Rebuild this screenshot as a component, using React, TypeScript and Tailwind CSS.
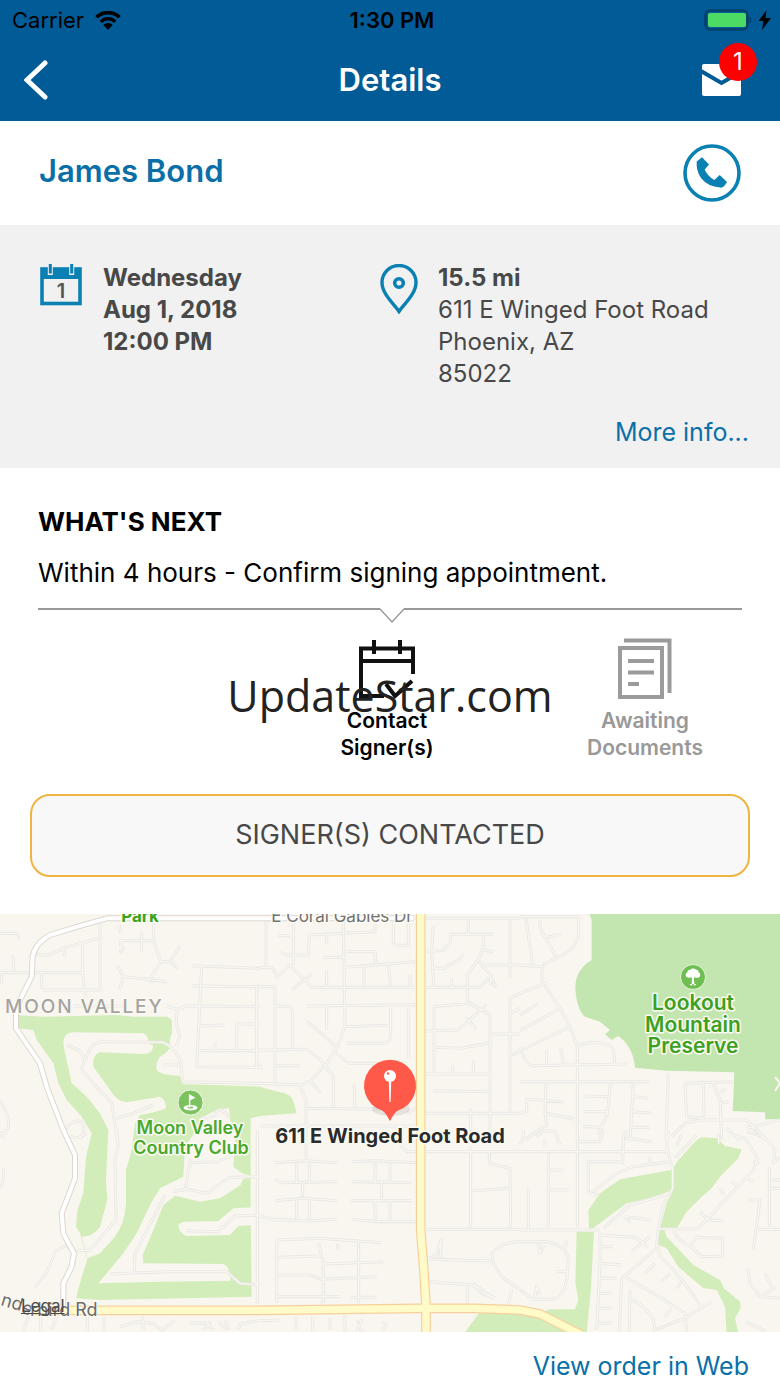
import React from "react";

type Tile = { x: number; y: number; roads: string };

const TILE_SCALE = 1 / 3;

const tiles: Tile[] = [
  {
    x: 0,
    y: -14,
    roads:
      "M0,100 H45 Q58,102 55,118 M38,165 L42,215 M0,218 H255 M5,218 V250 M90,163 L145,165 L190,145 L240,130 L295,115 M190,145 L195,172 M300,65 V270 H130 M125,218 V268 M247,130 V215 L257,290 M358,75 L362,102 M358,122 H455 M362,122 V140 M375,140 L358,160 M425,95 V155 M460,70 L462,125 L482,185 L445,245 M482,185 H510 L535,205 M510,185 L540,138 M350,195 L370,230 L358,270 M370,230 L440,238 L500,245 M575,197 L780,205 M605,200 L590,500 L780,502 M575,258 L780,260 M220,318 H380 M500,318 L532,328 L560,318 L780,320 M532,328 L528,370 L540,410 L528,440 M595,378 L675,375 M710,450 V372 H780 M600,452 H780 M645,452 V425 M770,260 V500 M200,435 L235,450 L255,475 M490,495 H540 M0,600 Q30,650 25,680 L5,715 M195,690 Q215,655 245,665 Q260,690 240,715 M245,510 Q255,465 280,435 Q290,425 310,425 L490,427 Q535,450 542,490 L548,545 L780,550 M245,510 L290,560 L335,610 L352,720 M350,655 L400,640 L460,615 M658,628 L680,640 L685,655 M600,660 L640,650 L655,628",
  },
  {
    x: 260,
    y: -14,
    roads:
      "M0,55 H780 M18,60 V205 M100,60 V195 M0,203 H35 L50,225 M55,107 H90 M60,158 L85,165 H145 L148,105 L250,100 L345,95 V65 M200,100 V130 M250,60 L255,375 M45,235 L90,195 L155,262 L465,262 M0,260 H45 V545 M95,270 L155,222 M200,210 V262 M190,172 H250 M260,155 H345 L348,200 M255,202 L465,185 M312,202 V255 M385,192 L392,258 M450,225 V262 M400,65 V130 Q402,136 415,136 H445 V65 M45,318 L90,320 Q98,325 98,345 V445 M140,318 L465,314 M200,318 V390 M140,365 L190,405 L228,440 M250,380 L385,376 M392,325 V410 Q385,430 370,430 H262 M445,325 V475 M255,375 L235,435 L200,490 L150,545 L118,555 L0,550 M0,450 L140,448 L182,480 L220,530 V620 M50,497 H120 M0,490 V510 M222,455 L268,490 L350,490 M150,545 L182,578 M118,555 L138,600 V720 M138,625 L360,628 M282,550 L285,625 M440,640 L470,625 M0,678 H465 M520,75 L515,145 M515,155 L522,262 M498,153 L548,152 L570,130 L572,103 L700,103 M625,60 V103 M525,205 H550 L595,180 L610,165 M670,105 V140 Q660,175 640,200 L622,225 V310 M670,150 L700,155 M655,182 L692,225 V258 M670,195 H780 M750,55 V235 M498,262 L660,262 L690,230 L710,262 M575,235 V262 M522,320 L630,310 L690,345 V715 M522,320 V520 M498,393 L595,390 L640,350 L680,312 M620,355 L650,388 M525,442 L600,445 L685,430 M695,402 H780 M780,280 L750,295 V640 M750,340 L780,325 M755,465 L780,455 M498,522 H690 M578,495 V515 M640,480 V515 M520,572 L690,575 M498,640 H780 M632,625 V720",
  },
  {
    x: 520,
    y: -14,
    roads:
      "M0,50 H175 V110 Q165,150 108,175 L68,195 M18,55 L38,195 M0,195 L68,200 Q62,230 70,250 L120,325 L148,375 L172,440 V720 M60,60 V85 L108,170 M82,112 L125,102 M0,280 L82,248 M0,345 L52,312 M0,392 L120,325 M5,450 L150,380 M0,440 Q15,490 35,497 L320,492 M172,440 Q210,418 270,435 Q285,450 283,490 M80,450 V490 M122,445 L130,490 M0,545 H390 M78,548 L75,640 L165,658 M0,640 L20,635 V598 L130,605 M75,640 L80,675 L15,720 M272,548 L262,640 L235,705 M190,588 L265,590 M190,635 H262 M190,680 L250,682 M340,550 L330,720 M340,590 L385,595 M338,635 L395,640 M332,682 H390 M445,520 L438,720 M495,550 L500,650 L550,655 M495,550 L640,545 M550,550 L552,655 M580,550 L600,600 L605,720 M600,575 L620,570 M455,710 L495,670 L540,660 L680,660 L740,720 M600,610 L625,605 M620,685 L660,720 M680,685 L780,660 M700,670 V695",
  },
  {
    x: 0,
    y: 216,
    roads:
      "M0,10 H20 M210,18 Q235,30 258,10 M350,0 L355,50 L345,85 L348,270 L270,360 L228,363 M0,175 Q15,150 10,115 M200,345 L165,365 L140,430 L105,470 M572,85 L555,180 M575,98 L655,95 L700,75 M520,185 L560,178 L620,190 L690,142 L780,140 M495,195 L405,370 L403,425 M332,432 L500,425 L680,425 L720,460 L780,465 M555,302 L655,305 L705,258 L780,255 M772,0 V520 M85,560 L70,605 M122,560 V605 M170,560 L155,600 M262,560 V605 M312,560 V605 M360,590 L410,575 L460,580 L485,600 L525,572 M428,560 L430,600 M570,578 L620,580 L640,600 M610,600 L632,575 M655,575 L680,600 M675,570 L688,600 M715,600 L720,582 L775,572",
  },
  {
    x: 260,
    y: 216,
    roads:
      "M138,40 V95 M42,98 L140,92 L232,98 M45,145 L60,158 L230,155 M110,100 V155 M148,100 V155 M128,160 V200 M45,212 L130,205 L232,212 M110,210 V268 M148,210 V268 M45,268 L140,273 L230,268 M275,95 L345,92 L470,98 M275,155 L455,158 M345,98 V155 M390,98 V155 M365,160 V205 M272,212 L455,212 M345,210 V270 M390,210 V275 M275,268 L350,275 L470,275 M0,258 L55,272 M50,330 L180,325 L365,338 M50,330 V520 M175,338 L190,400 V520 M55,382 L180,378 M190,402 L370,395 M55,435 L150,435 L185,448 L350,440 M50,500 L240,500 M272,502 H350 M296,335 V520 M232,340 L235,360 M420,45 L440,65 L780,65 M632,50 V295 M688,60 V100 L750,115 L752,295 M635,182 L745,175 M498,298 H780 M545,325 L540,385 M505,385 L530,375 L545,325 M505,388 L695,393 M780,335 Q725,335 695,370 L700,400 L725,440 L780,480 M510,455 L645,465 L680,490 L705,505 M640,465 L665,490 L705,505 M622,470 V520 M745,525 L755,480 M0,572 L60,570 M108,560 V600 M158,560 V605 M210,565 V600 M255,555 V605 M290,575 L305,572 L290,605 L310,600 M365,575 L380,585 L368,600",
  },
  {
    x: 520,
    y: 216,
    roads:
      "M172,0 V300 M172,35 H240 L250,0 M0,65 H445 M10,0 V20 L0,45 M50,20 Q65,-5 105,5 L120,45 M75,30 V50 M320,0 L310,20 L308,105 M315,25 L395,35 M445,0 L440,50 L455,110 M465,85 L530,15 M470,45 L485,15 M85,70 V295 M25,175 V300 M90,120 H130 M90,180 H145 M205,190 V95 H300 M210,190 L290,130 L340,110 L445,95 M220,180 L235,200 M390,80 V100 M0,300 H240 M458,115 V175 L430,225 L415,300 L410,345 L420,375 M250,295 L330,225 L435,195 M315,260 L395,270 M315,260 L330,278 M420,297 H530 L560,270 L700,120 L712,85 L675,25 L640,15 M700,95 L720,100 M540,245 L565,270 L610,272 M600,175 L612,195 M635,155 L650,165 M675,140 L700,155 M595,10 L597,40 M680,5 Q740,15 765,60 L760,100 L780,80 M748,110 V290 M755,150 H780 M748,175 H780 M715,298 H780 M682,210 H720 L700,360 M0,335 L80,335 Q140,345 145,390 L140,450 Q130,500 100,508 L40,508 L0,480 M55,335 L60,370 L72,345 M45,500 L50,470 L60,495 M110,425 H140 M138,330 V350 M240,308 V400 L230,600 M240,315 L345,322 L385,350 M240,350 L278,350 M240,400 L305,405 M235,445 H290 M235,490 H275 M235,535 H275 M230,580 H275 M460,300 Q470,330 520,355 L545,380 L608,378 V325 L530,322 L512,345 M335,365 L390,320 M410,355 L305,445 L298,605 M315,440 L400,490 L495,550 L500,605 M330,480 L328,605 M335,510 Q370,520 400,570 L405,605 M415,375 L460,420 L510,480 L540,525 M375,430 L405,400 M425,455 L450,430 M470,475 L485,455 M485,570 L575,515 M435,560 L455,535 M405,600 L480,570 M683,415 L690,460 L720,500 L770,470 M735,430 L755,470 M720,500 L780,505 M675,575 L740,605",
  },
];

const park = "#d3edba";
const land = "#f9f6ef";

function tileTransform(x: number, y: number) {
  return `translate(${x} ${y}) scale(${TILE_SCALE})`;
}

function MinorRoads({ stroke, width }: { stroke: string; width: number }) {
  return (
    <g fill="none" stroke={stroke} strokeWidth={width} strokeLinejoin="round">
      {tiles.map((t) => (
        <path key={`${t.x}-${t.y}`} d={t.roads} transform={tileTransform(t.x, t.y)} />
      ))}
    </g>
  );
}

const whiteRoad =
  "M1240,55 H320 Q230,80 150,105 Q105,130 98,170 L95,230 L60,300 L48,340 V385 L120,490 L140,560 L190,690 L225,765 V835 L185,940 L190,1000 L222,1060 L215,1100 L190,1150 V1230";
const yellowRoads =
  "M1262,20 V990 L1270,1090 L1278,1215 V1320 M100,1231 H780 L1260,1225 H1420 L1560,1230 L1620,1242 L1745,1305";

function Label({
  x,
  y,
  className,
  children,
}: {
  x: number;
  y: number;
  className: string;
  children: React.ReactNode;
}) {
  return (
    <text
      x={x}
      y={y}
      textAnchor="middle"
      stroke="#fbfaf4"
      strokeWidth="3"
      strokeLinejoin="round"
      paintOrder="stroke"
      className={className}
    >
      {children}
    </text>
  );
}

function MapView() {
  return (
    <section aria-label="Map" className="relative h-[418px] overflow-hidden bg-[#f9f6ef]">
      <svg
        viewBox="0 0 780 418"
        preserveAspectRatio="xMidYMid slice"
        className="block h-full w-full"
      >
        <rect width="780" height="418" fill={land} />
        <g transform={tileTransform(0, -14)}>
          <path
            fill={park}
            d="M50,345 L130,350 L350,345 L400,350 H500 Q518,355 516,370 V400 Q505,420 512,440 Q505,455 480,470 Q465,490 470,510 Q485,527 540,527 L548,552 L780,560 L840,577 Q875,580 882,610 L890,640 L780,648 L752,655 V925 H752 L755,1190 L300,1200 L228,1195 L245,1130 L262,1080 L240,1000 L228,980 L232,930 L250,880 L258,770 L275,700 L245,650 L200,600 L175,550 L160,490 L110,420 L100,390 L50,385Z"
          />
          <path
            fill={land}
            d="M190,430 Q190,398 220,397 L430,400 Q445,405 445,430 L458,435 Q462,460 430,462 L300,457 Q275,465 280,500 L330,570 Q350,605 380,607 L480,590 Q500,600 497,625 Q480,635 420,645 L405,670 L395,750 L378,810 V910 Q375,970 345,1010 L300,1060 L262,1075 L245,1010 Q280,1010 300,980 L322,900 L318,840 L325,690 L300,640 L260,590 L215,550 Q205,500 195,460Z"
          />
          <path
            fill={land}
            d="M590,690 L600,655 L655,628 L688,625 L690,660 L708,690 L700,800 L725,820 L750,826 Q725,835 722,855 L660,895 L600,905 L525,887 L490,915 L460,990 L428,1065 L430,1090 L670,1092 Q690,1100 692,1142 L480,1145 L295,1150 L370,1060 L410,1000 L455,905 L480,865 L550,830 L555,740Z"
          />
          <path
            fill={land}
            d="M535,980 Q535,965 560,965 L655,963 L700,925 L770,922 V975 L715,978 L690,1005 L560,1008 Q540,1000 535,980Z"
          />
        </g>
        <g transform={tileTransform(520, -14)}>
          <path
            fill="#c3e6b1"
            d="M205,35 L215,60 V180 Q165,210 166,265 Q170,330 195,350 L240,365 L270,390 L255,403 L275,420 L295,408 Q340,440 345,503 L440,512 L643,517 L638,633 L735,637 L736,658 H790 V35Z"
          />
          <path
            fill={park}
            d="M530,720 L545,712 L590,715 L615,738 L665,748 L655,775 L600,830 L575,865 L545,890 L500,935 L470,985 H420 L440,910 L460,870 L385,895 L320,910 L265,950 L220,985 H207 L205,930 L240,880 L300,838 L370,825 L455,810 L475,780Z"
          />
          <path
            fill={park}
            d="M170,995 H222 L212,1180 L200,1300 L-165,1300 L-160,1290 L-120,1235 L60,1240 L90,1228 L165,1228 L175,1200 L166,1150 Z"
          />
          <path
            fill={park}
            d="M418,990 H433 L440,1010 L520,1095 L600,1140 L612,1165 L660,1205 L662,1225 L645,1255 L655,1300 H620 L615,1220 L590,1170 L550,1165 L475,1100 L440,1045 L415,1035Z"
          />
        </g>
        <MinorRoads stroke="#e9e7e2" width={9} />
        <MinorRoads stroke="#f8f6f2" width={4} />
        <g transform={tileTransform(0, -14)} fill="none" strokeLinejoin="round">
          <path d={whiteRoad} stroke="#dcd8d1" strokeWidth="18" />
          <path d={whiteRoad} stroke="#ffffff" strokeWidth="12" />
          <path d={yellowRoads} stroke="#f8cf9c" strokeWidth="29" />
          <path d={yellowRoads} stroke="#fffbc8" strokeWidth="22" />
        </g>
        <path d="M775 163l5 6-5 8" fill="none" stroke="#f9f6ef" strokeWidth="2" />

        <g transform="translate(190.5 188.5)">
          <circle r="12.5" fill="#7cc25e" stroke="#ecf6e2" />
          <ellipse cx="0" cy="5.2" rx="7" ry="2.8" fill="#fff" />
          <ellipse cx="0" cy="5" rx="3" ry="1" fill="#7cc25e" />
          <path d="M-1.6-8.5V5h1.4v-7.2L5-4.7z" fill="#fff" />
        </g>
        <g transform="translate(693 63)">
          <circle r="12.5" fill="#6fbe52" stroke="#e6f5dc" />
          <path
            d="M-1.2 7.8h2.6l-.5-7 .4-.5c4 1.4 6-.4 6-2.4 0-1.4-.6-2.4-1.8-2.7.2-1.7-1-2.7-2.5-2.4C2-8.8-1.9-8.8-2.8-7.100c-1.600-.3-2.900.9-2.700 2.400-1.200.400-1.900 1.500-1.800 2.800.1 2 2.100 3.500 5.700 2.200l.5.6zM-3 7h6v1.200h-6z"
            fill="#fff"
          />
        </g>

        <text
          x="5"
          y="99"
          className="fill-[#a5a39f] text-[19px] font-medium tracking-widest"
          stroke="#fbfaf4"
          strokeWidth="2"
          paintOrder="stroke"
        >
          MOON VALLEY
        </text>
        <Label x={140} y={8} className="fill-[#3da419] text-[17px] font-bold">
          Park
        </Label>
        <Label x={342} y={8} className="fill-[#737373] text-[17px]">
          E Coral Gables Dr
        </Label>
        <Label x={190} y={220} className="fill-[#4aa82b] text-[18px] font-semibold">
          Moon Valley
        </Label>
        <Label x={191} y={240} className="fill-[#4aa82b] text-[18px] font-semibold">
          Country Club
        </Label>
        <Label x={693} y={96} className="fill-[#3da11f] text-[21px] font-semibold">
          Lookout
        </Label>
        <Label x={693} y={118} className="fill-[#3da11f] text-[21px] font-semibold">
          Mountain
        </Label>
        <Label x={693} y={139} className="fill-[#3da11f] text-[21px] font-semibold">
          Preserve
        </Label>
        <path id="rd" d="M0,391 L20,397 Q26,402 36,402 H140" fill="none" />
        <text
          className="fill-[#6b6b6b] text-[18px]"
          stroke="#fbfaf4"
          strokeWidth="2"
          paintOrder="stroke"
        >
          <textPath href="#rd">nderbird Rd</textPath>
        </text>

        <ellipse cx="391" cy="195" rx="19" ry="7" fill="#000" opacity=".08" />
        <path
          d="M390 207c-1.500-2.500-4-8-8-10.500A26 26 0 1 1 398 196.500c-4 2.500-6.500 8-8 10.500z"
          fill="#ff5a49"
        />
        <path d="M388.800 168h2.400l-.6 20h-1.200z" fill="#fff" />
        <circle cx="390" cy="162" r="6" fill="#fff" />
        <circle cx="388" cy="159.500" r="1.200" fill="#ff5a49" />
        <Label x={390} y={229} className="fill-[#2a2a2a] text-[20px] font-bold">
          611 E Winged Foot Road
        </Label>
      </svg>
      <a
        href="#legal"
        className="absolute bottom-4 left-[21px] text-[17px] leading-5 text-[#4a4a4a] underline"
      >
        Legal
      </a>
    </section>
  );
}

function StatusBar() {
  return (
    <div className="grid h-10 grid-cols-3 items-center pr-2 pl-3 text-[22px] leading-6 text-black">
      <div className="flex items-center gap-[11px]">
        <span>Carrier</span>
        <svg viewBox="0 0 26 19" className="h-[19px] w-[26px]" aria-hidden="true">
          <path d="M1.500 6.300a16.500 16.500 0 0 1 23 0" fill="none" stroke="#000" strokeWidth="3.600" />
          <path d="M5.800 10.700a10.300 10.300 0 0 1 14.400 0" fill="none" stroke="#000" strokeWidth="3.400" />
          <path d="M13 18.800l-4.700-4.900a6.700 6.700 0 0 1 9.400 0z" fill="#000" />
        </svg>
      </div>
      <div className="text-center font-semibold">1:30 PM</div>
      <div className="flex justify-end">
        <svg viewBox="0 0 68 22" className="h-[22px] w-[68px]" aria-label="Battery charging">
          <rect x="1.500" y="1.500" width="42" height="19" rx="4.500" fill="none" stroke="#04406c" strokeWidth="2.500" />
          <rect x="4" y="4" width="38" height="14" rx="2" fill="#4cd964" />
          <path d="M46 8q2 3 0 6z" fill="#04406c" stroke="#04406c" />
          <path d="M62.500 1L54.500 12h5l-1.500 9L67 9h-5.500z" fill="#000" />
        </svg>
      </div>
    </div>
  );
}

function CalendarIcon() {
  return (
    <svg viewBox="0 0 42 42" className="mt-0.5 h-[42px] w-[42px] shrink-0" aria-hidden="true">
      <rect x="2" y="5" width="38" height="34.500" fill="#f1f1f1" stroke="#0a80b3" strokeWidth="3.600" />
      <path d="M1 4h40v11H1z" fill="#0a80b3" />
      <path d="M10.300 0v11M31.700 0v11" stroke="#f1f1f1" strokeWidth="5" />
      <path d="M10.300 0v9.500M31.700 0v9.500" stroke="#0a80b3" strokeWidth="3" />
      <text x="21" y="34" textAnchor="middle" className="fill-[#555] text-[20px] font-semibold">
        1
      </text>
    </svg>
  );
}

function PinIcon() {
  return (
    <svg viewBox="0 0 40 50" className="mt-0.5 h-[50px] w-10 shrink-0" fill="none" stroke="#0a80b3" aria-hidden="true">
      <path
        d="M20 47.500C15 40 3 30 3 18.500a17 17 0 0 1 34 0C37 30 25 40 20 47.500z"
        strokeWidth="3.400"
      />
      <circle cx="20" cy="19" r="4.300" strokeWidth="3.600" />
    </svg>
  );
}

export default function App() {
  return (
    <div className="relative w-full bg-white font-['Inter',sans-serif]">
      <header className="bg-[#005b97]">
        <StatusBar />
        <div className="grid h-[81px] grid-cols-3 items-center px-6 pb-0.5">
          <button type="button" aria-label="Back" className="w-6">
            <svg viewBox="0 0 24 40" className="h-10 w-6" aria-hidden="true">
              <path
                d="M21 3L3 20l18 17"
                fill="none"
                stroke="#fff"
                strokeWidth="5"
                strokeLinecap="round"
              />
            </svg>
          </button>
          <h1 className="text-center text-[31px] leading-10 font-semibold text-white">Details</h1>
          <button
            type="button"
            aria-label="Messages, 1 unread"
            className="relative mr-[15px] justify-self-end"
          >
            <svg viewBox="0 0 39 34" className="h-[34px] w-[39px]" aria-hidden="true">
              <rect x="0" y="1" width="39" height="32" rx="2" fill="#fff" />
              <path d="M-1 8L19.500 20 40 8" fill="none" stroke="#005b97" strokeWidth="4" />
            </svg>
            <span className="absolute -top-5 -right-4 flex size-[38px] items-center justify-center rounded-full bg-[#fe0000] text-[24px] leading-none text-white">
              1
            </span>
          </button>
        </div>
      </header>

      <div className="flex h-[104px] items-center justify-between px-[39px]">
        <h2 className="pb-1 text-[31px] leading-10 font-semibold text-[#0a6fa6]">James Bond</h2>
        <button type="button" aria-label="Call James Bond">
          <svg viewBox="0 0 58 58" className="h-[58px] w-[58px]" aria-hidden="true">
            <circle cx="29" cy="29" r="27" fill="none" stroke="#0a80b3" strokeWidth="3.600" />
            <path
              d="M19 13.200L26 20.400 21.700 25.400Q24 31.500 31.300 36L36.700 31 44 38Q41 44 37.300 43.600 24.500 42.500 18 34 13 27 13.700 17.500z"
              fill="#0a80b3"
            />
          </svg>
        </button>
      </div>

      <section className="bg-[#f1f1f1] pt-[37px] pr-[31px] pb-5 pl-10 text-[24px] leading-8 text-[#484848]">
        <div className="flex">
          <div className="flex w-[339px] shrink-0 gap-[21px]">
            <CalendarIcon />
            <p className="font-bold">
              Wednesday
              <br />
              Aug 1, 2018
              <br />
              12:00 PM
            </p>
          </div>
          <div className="flex gap-[19px]">
            <PinIcon />
            <p>
              <strong className="font-bold">15.5 mi</strong>
              <br />
              611 E Winged Foot Road
              <br />
              Phoenix, AZ
              <br />
              85022
            </p>
          </div>
        </div>
        <div className="mt-[26px] flex justify-end">
          <a href="#info" className="text-[25px] text-[#0a70a8]">
            More info...
          </a>
        </div>
      </section>

      <section className="pt-[38px]">
        <div className="px-[38px] text-black">
          <h3 className="text-[26px] leading-8 font-bold">WHAT'S NEXT</h3>
          <p className="mt-[19px] text-[26px] leading-8">
            Within 4 hours - Confirm signing appointment.
          </p>
          <div className="mt-[19px] flex h-4 items-start" aria-hidden="true">
            <span className="w-[calc(50%-10px)] border-t-2 border-[#999]" />
            <svg viewBox="0 0 24 16" className="h-4 w-6" fill="none" stroke="#999" strokeWidth="1.500">
              <path d="M0 1l12 13L24 1" />
            </svg>
            <span className="flex-1 border-t-2 border-[#999]" />
          </div>
        </div>

        <div className="relative mt-3.5 pr-1.5">
          <ul className="grid grid-cols-3 text-center text-[21px] leading-[27px] font-semibold">
            <li className="col-start-2 flex flex-col items-center text-black">
              <svg viewBox="0 0 58 64" className="mb-[5px] h-16 w-[58px]" fill="none" stroke="#111" strokeWidth="4" aria-hidden="true">
                <path d="M26 58H3V10.500H55V36M3 23H55M16 2v14M42 2v14" />
                <path d="M28 46l9 12 17-15" />
              </svg>
              Contact
              <br />
              Signer(s)
            </li>
            <li className="flex flex-col items-center text-[#999]">
              <svg viewBox="0 0 54 64" className="mb-[5px] h-16 w-[54px]" fill="none" stroke="#9b9b9b" strokeWidth="4" aria-hidden="true">
                <path d="M6 2.500H51.500V55" />
                <path d="M2 10H44V59H2zM10 23H36M10 34.500H36M10 46H21" />
              </svg>
              Awaiting
              <br />
              Documents
            </li>
          </ul>
          <div className="pointer-events-none absolute inset-x-0 top-[31px] text-center font-['Open_Sans',sans-serif] text-[43px] leading-[54px] text-[#222]">
            UpdateStar.com
          </div>
        </div>

        <div className="px-[30px] pt-[33px] pb-[37px]">
          <button
            type="button"
            className="h-[83px] w-full rounded-[20px] border-2 border-[#efb540] bg-[#f8f8f8] text-[27px] text-[#484848]"
          >
            SIGNER(S) CONTACTED
          </button>
        </div>
      </section>

      <MapView />

      <footer className="flex justify-end px-[31px] pt-[18px] pb-[5px] text-[25px] leading-8">
        <a href="#order" className="text-[#0a70a8]">
          View order in Web
        </a>
      </footer>
    </div>
  );
}
